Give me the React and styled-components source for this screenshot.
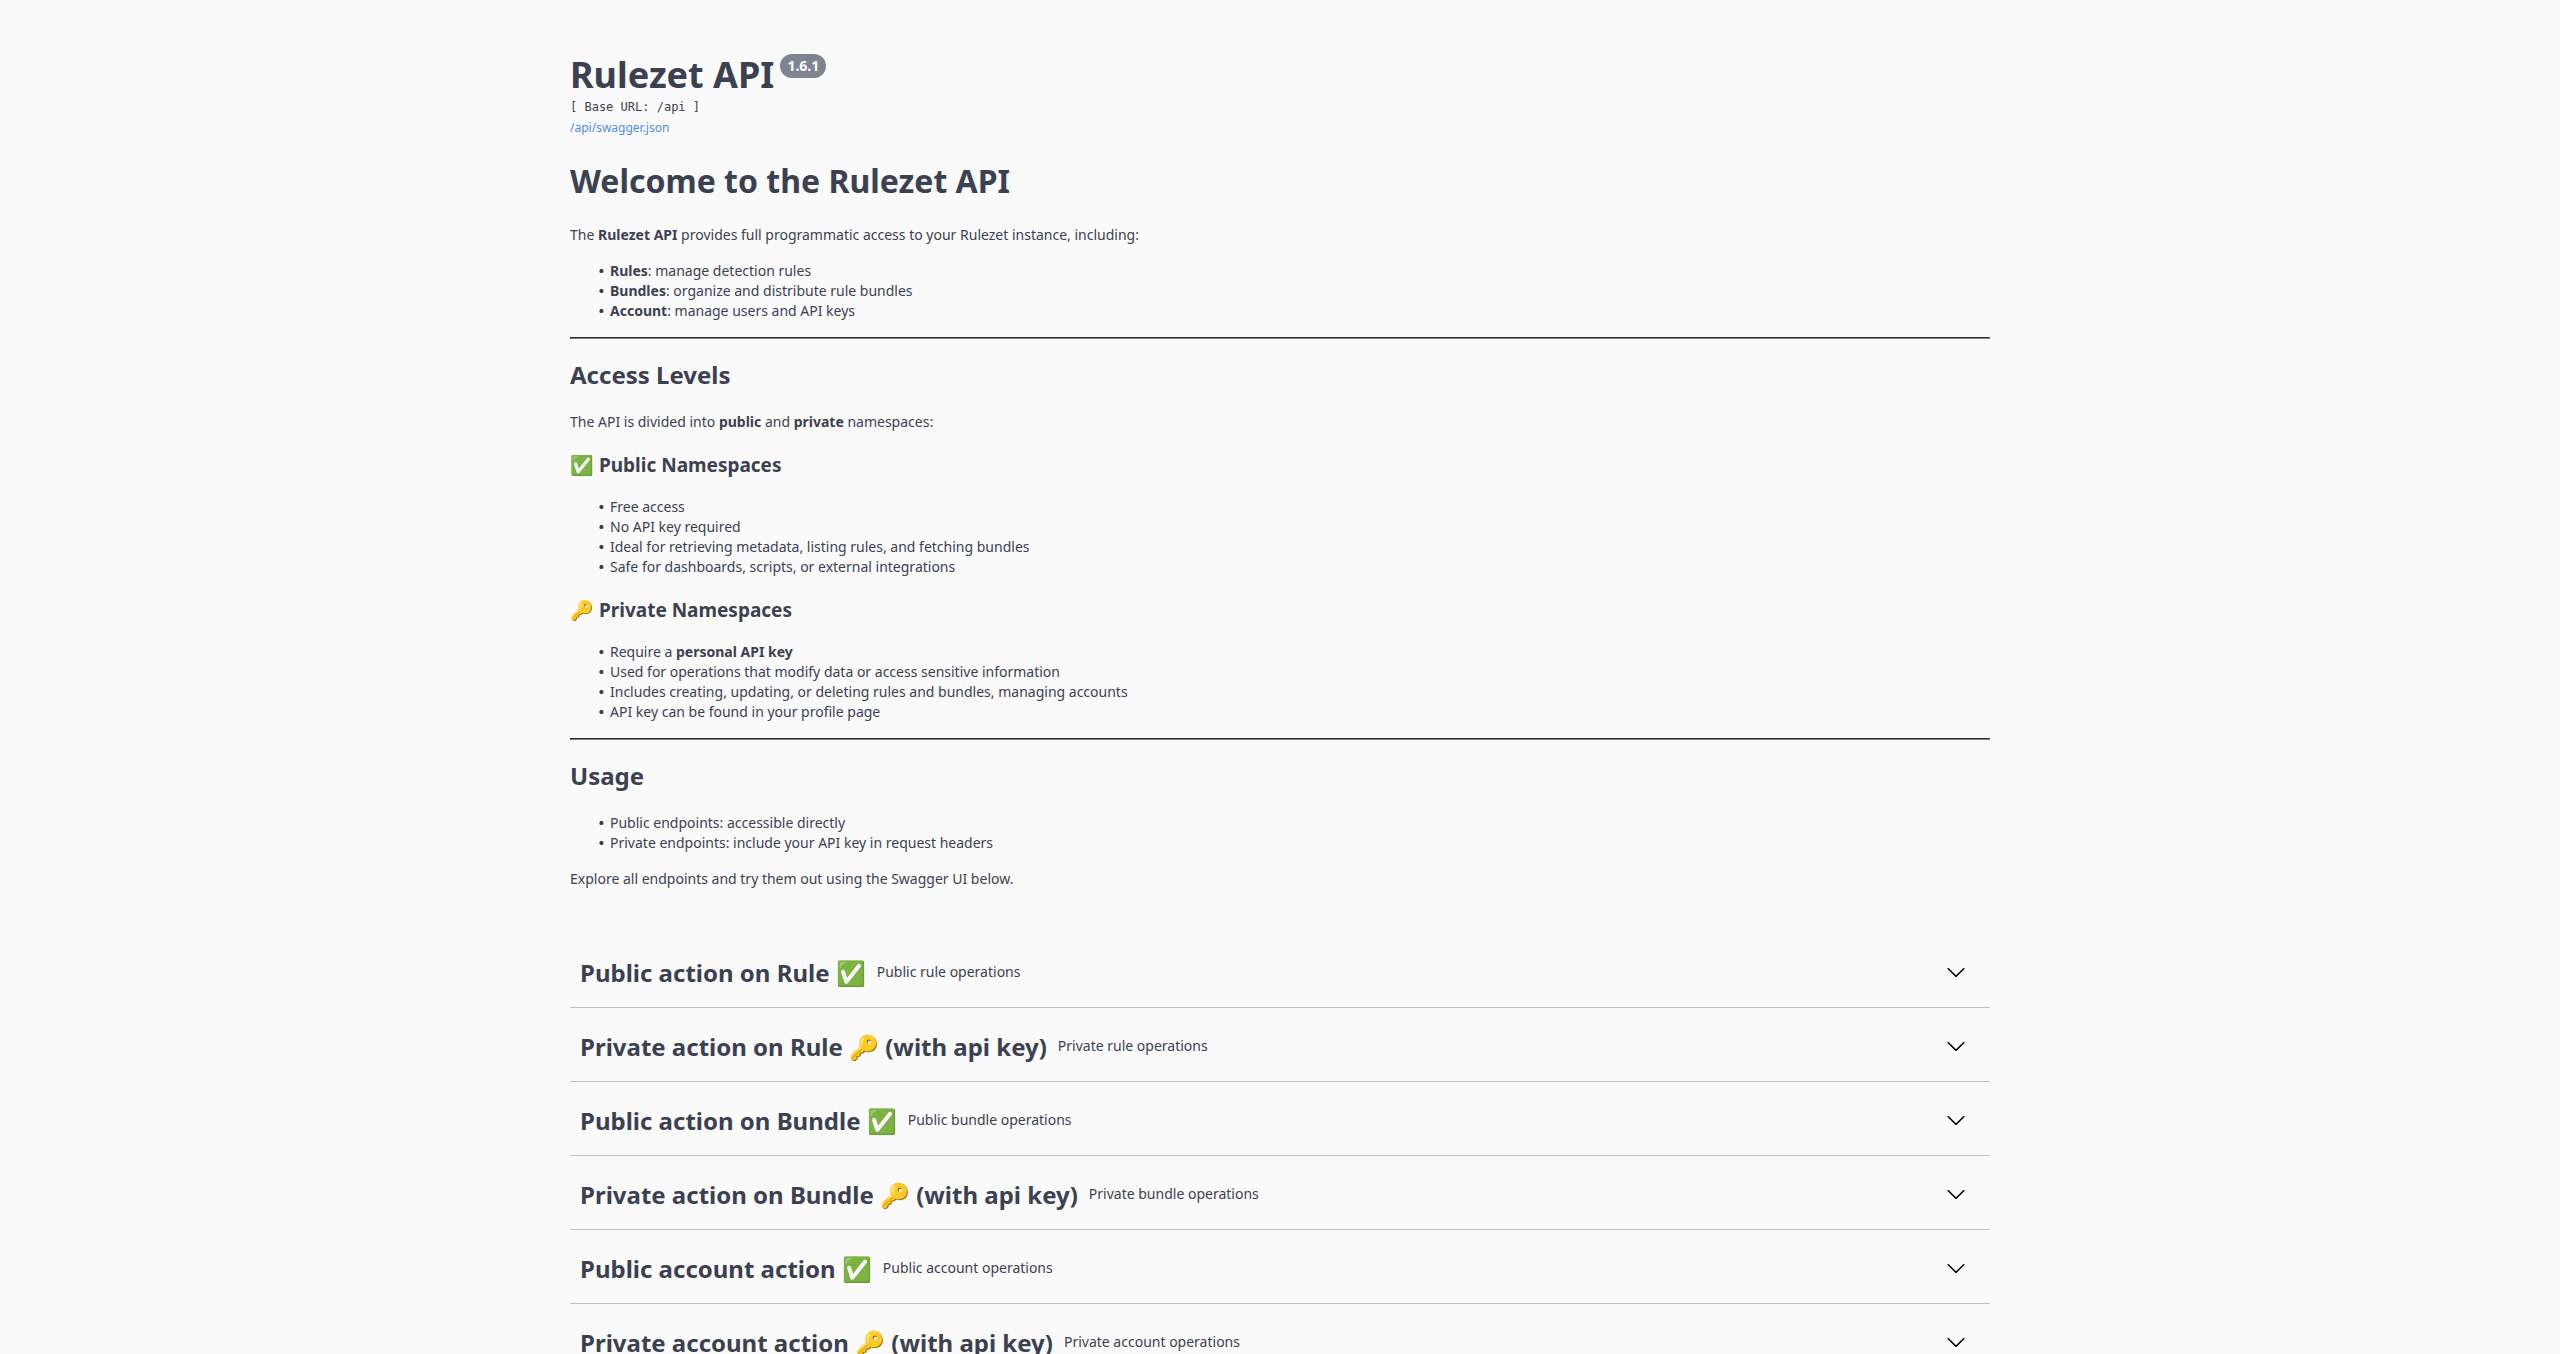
import styled, { createGlobalStyle } from "styled-components";

const sections = [
  { name: "Public action on Rule ✅", description: "Public rule operations" },
  { name: "Private action on Rule 🔑 (with api key)", description: "Private rule operations" },
  { name: "Public action on Bundle ✅", description: "Public bundle operations" },
  { name: "Private action on Bundle 🔑 (with api key)", description: "Private bundle operations" },
  { name: "Public account action ✅", description: "Public account operations" },
  { name: "Private account action 🔑 (with api key)", description: "Private account operations" },
];

function App() {
  return (
    <S.Page>
      <GlobalStyle />
      <S.Wrapper>
        <S.Info>
          <S.Title>
            Rulezet API
            <S.Version>1.6.1</S.Version>
          </S.Title>
          <S.BaseUrl>[ Base URL: /api ]</S.BaseUrl>
          <S.SpecLink href="/api/swagger.json">/api/swagger.json</S.SpecLink>
          <S.Markdown>
            <h1>Welcome to the Rulezet API</h1>
            <p>
              The <strong>Rulezet API</strong> provides full programmatic access to your Rulezet
              instance, including:
            </p>
            <ul>
              <li><strong>Rules</strong>: manage detection rules</li>
              <li><strong>Bundles</strong>: organize and distribute rule bundles</li>
              <li><strong>Account</strong>: manage users and API keys</li>
            </ul>
            <hr />
            <h2>Access Levels</h2>
            <p>
              The API is divided into <strong>public</strong> and <strong>private</strong> namespaces:
            </p>
            <h3>✅ Public Namespaces</h3>
            <ul>
              <li>Free access</li>
              <li>No API key required</li>
              <li>Ideal for retrieving metadata, listing rules, and fetching bundles</li>
              <li>Safe for dashboards, scripts, or external integrations</li>
            </ul>
            <h3>🔑 Private Namespaces</h3>
            <ul>
              <li>Require a <strong>personal API key</strong></li>
              <li>Used for operations that modify data or access sensitive information</li>
              <li>Includes creating, updating, or deleting rules and bundles, managing accounts</li>
              <li>API key can be found in your profile page</li>
            </ul>
            <hr />
            <h2>Usage</h2>
            <ul>
              <li>Public endpoints: accessible directly</li>
              <li>Private endpoints: include your API key in request headers</li>
            </ul>
            <p>Explore all endpoints and try them out using the Swagger UI below.</p>
          </S.Markdown>
        </S.Info>
        {sections.map((section) => (
          <S.Section key={section.name}>
            <S.SectionName>{section.name}</S.SectionName>
            <S.Description>{section.description}</S.Description>
            <S.Toggle aria-label={`Expand ${section.name}`}>
              <svg width="20" height="20" viewBox="0 0 20 20">
                <path d="M17.418 6.109c.272-.268.709-.268.979 0s.271.701 0 .969l-7.908 7.83c-.27.268-.707.268-.979 0l-7.908-7.83c-.27-.268-.27-.701 0-.969.271-.268.709-.268.979 0L10 13.25l7.418-7.141z" />
              </svg>
            </S.Toggle>
          </S.Section>
        ))}
      </S.Wrapper>
    </S.Page>
  );
}

export default App;

const GlobalStyle = createGlobalStyle`
  *, *::before, *::after {
    box-sizing: border-box;
  }

  html {
    scrollbar-width: none;
  }

  body {
    margin: 0;
    background: #fafafa;
  }
`;

const S = {
  Page: styled.div`
    font-family: "Noto Sans", sans-serif;
    color: #3b4151;
  `,
  Wrapper: styled.main`
    max-width: 1460px;
    margin: 0 auto;
    padding: 0 20px;
  `,
  Info: styled.div`
    padding: 50px 0 34px;
  `,
  Title: styled.h2`
    display: flex;
    align-items: flex-start;
    gap: 6px;
    margin: 0;
    font-size: 36px;
    line-height: 49px;
    font-weight: 700;
  `,
  Version: styled.small`
    margin-top: 4px;
    padding: 2px 7px;
    border-radius: 57px;
    background: #7d8492;
    color: #ffffff;
    font-size: 14px;
    line-height: 20px;
  `,
  BaseUrl: styled.pre`
    margin: 0;
    font-family: "DejaVu Sans Mono", monospace;
    font-size: 12px;
    line-height: 16px;
  `,
  SpecLink: styled.a`
    display: block;
    margin-top: 4px;
    color: #4990e2;
    font-size: 12px;
    line-height: 17px;
    text-decoration: none;
  `,
  Markdown: styled.div`
    font-size: 14px;
    line-height: 20px;

    h1 {
      margin: 23px 0;
      font-size: 32px;
      line-height: 43px;
    }

    h2 {
      margin: 19px 0 21px;
      font-size: 24px;
      line-height: 33px;
    }

    h3 {
      margin: 21px 0 19px;
      font-size: 19px;
      line-height: 25px;
    }

    p {
      margin: 16px 0;
    }

    ul {
      margin: 16px 0;
      padding-left: 40px;
      list-style-type: "•\\00a0";
    }

    li::marker {
      font-family: "DejaVu Sans", sans-serif;
    }

    hr {
      margin: 16px 0;
      border: 1px inset #808080;
    }
  `,
  Section: styled.section`
    display: flex;
    align-items: center;
    padding: 9px 20px 11px 10px;
    margin-bottom: 5px;
    height: 69px;
    border-bottom: 1px solid #c0c0c2;
  `,
  SectionName: styled.h3`
    margin: 0;
    font-size: 24px;
    line-height: 33px;
  `,
  Description: styled.small`
    flex: 1;
    padding: 0 11px;
    font-size: 14px;
    line-height: 20px;
  `,
  Toggle: styled.button`
    display: flex;
    padding: 0 4px;
    border: 0;
    background: none;
    cursor: pointer;
  `,
};
